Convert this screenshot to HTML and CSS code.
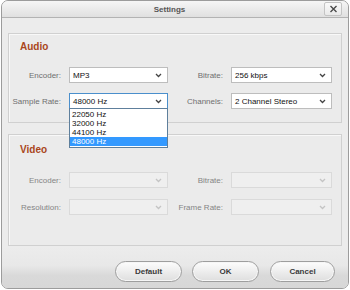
FILE: index.html
```html
<!DOCTYPE html>
<html>
<head>
<meta charset="utf-8">
<link rel="stylesheet" href="styles.css">
</head>
<body>
<div class="window">
  <div class="titlebar">
    <span class="tb-spacer"></span>
    <span class="title">Settings</span>
    <span class="tb-right">
      <span class="close">
        <svg width="9" height="8" viewBox="0 0 9 8"><path d="M1.5 1 L7.5 7 M7.5 1 L1.5 7" stroke="#4a4a4a" stroke-width="1.4" fill="none"/></svg>
      </span>
    </span>
  </div>
  <div class="content">
    <section class="group audio">
      <h2 class="group-title">Audio</h2>
      <div class="grid">
        <span class="label">Encoder:</span>
        <div class="select"><span class="val">MP3</span><svg class="chev" width="7" height="5" viewBox="0 0 7 5"><path d="M1 1 L3.5 3.5 L6 1" stroke="#444" stroke-width="1.3" fill="none"/></svg></div>
        <span class="label">Bitrate:</span>
        <div class="select"><span class="val">256 kbps</span><svg class="chev" width="7" height="5" viewBox="0 0 7 5"><path d="M1 1 L3.5 3.5 L6 1" stroke="#444" stroke-width="1.3" fill="none"/></svg></div>
        <span class="label">Sample Rate:</span>
        <div class="select focus"><span class="val">48000 Hz</span><svg class="chev" width="7" height="5" viewBox="0 0 7 5"><path d="M1 1 L3.5 3.5 L6 1" stroke="#444" stroke-width="1.3" fill="none"/></svg>
          <ul class="list">
            <li>22050 Hz</li>
            <li>32000 Hz</li>
            <li>44100 Hz</li>
            <li class="sel">48000 Hz</li>
          </ul>
        </div>
        <span class="label">Channels:</span>
        <div class="select"><span class="val">2 Channel Stereo</span><svg class="chev" width="7" height="5" viewBox="0 0 7 5"><path d="M1 1 L3.5 3.5 L6 1" stroke="#444" stroke-width="1.3" fill="none"/></svg></div>
      </div>
    </section>
    <section class="group video">
      <h2 class="group-title">Video</h2>
      <div class="grid">
        <span class="label dis">Encoder:</span>
        <div class="select disabled"><span class="val"></span><svg class="chev" width="7" height="5" viewBox="0 0 7 5"><path d="M1 1 L3.5 3.5 L6 1" stroke="#c4c4c4" stroke-width="1.3" fill="none"/></svg></div>
        <span class="label dis">Bitrate:</span>
        <div class="select disabled"><span class="val"></span><svg class="chev" width="7" height="5" viewBox="0 0 7 5"><path d="M1 1 L3.5 3.5 L6 1" stroke="#c4c4c4" stroke-width="1.3" fill="none"/></svg></div>
        <span class="label dis">Resolution:</span>
        <div class="select disabled"><span class="val"></span><svg class="chev" width="7" height="5" viewBox="0 0 7 5"><path d="M1 1 L3.5 3.5 L6 1" stroke="#c4c4c4" stroke-width="1.3" fill="none"/></svg></div>
        <span class="label dis">Frame Rate:</span>
        <div class="select disabled"><span class="val"></span><svg class="chev" width="7" height="5" viewBox="0 0 7 5"><path d="M1 1 L3.5 3.5 L6 1" stroke="#c4c4c4" stroke-width="1.3" fill="none"/></svg></div>
      </div>
    </section>
  </div>
  <div class="footer">
    <span class="btn b-default">Default</span>
    <span class="btn b-ok">OK</span>
    <span class="btn b-cancel">Cancel</span>
  </div>
</div>
</body>
</html>
```

FILE: styles.css
```css
* { box-sizing: border-box; }
html, body { margin: 0; padding: 0; background: #ffffff; }
body {
  font-family: "Liberation Sans", Arial, sans-serif;
  font-size: 8px;
  color: #222;
}
.window {
  width: 348px;
  height: 289px;
  margin-left: 1px;
  border: 1px solid #9c9c9c;
  border-radius: 7px;
  background: #ececec;
  overflow: hidden;
  display: flex;
  flex-direction: column;
}
.titlebar {
  height: 17px;
  flex: none;
  border-bottom: 1px solid #b3b3b3;
  background: linear-gradient(#f6f6f6, #e0e0e0);
  display: grid;
  grid-template-columns: 1fr auto 1fr;
  align-items: center;
}
.title {
  font-weight: bold;
  font-size: 8px;
  color: #555;
  margin-right: 11px;
}
.tb-right {
  display: flex;
  justify-content: flex-end;
  align-self: start;
  padding-right: 6px;
}
.close {
  width: 18px;
  height: 14px;
  margin-top: 1px;
  border: 1px solid #c4c4c4;
  border-radius: 2px;
  background: linear-gradient(#fafafa, #e9e9e9);
  display: flex;
  align-items: center;
  justify-content: center;
}
.content {
  padding: 15px 6px 0 6px;
  display: flex;
  flex-direction: column;
  gap: 11px;
}
.group {
  border: 1px solid #d0d0d0;
  box-shadow: inset 1px 1px 0 #f8f8f8;
  background: #ebebeb;
}
.audio { height: 90px; padding-top: 7px; }
.video { height: 112px; padding-top: 9px; }
.group-title {
  margin: 0 0 0 11px;
  font-size: 10px;
  line-height: 12px;
  font-weight: bold;
  color: #a9461b;
}
.grid {
  display: grid;
  grid-template-columns: 52px 99px 47px 101px;
  column-gap: 8px;
  grid-auto-rows: 16px;
}
.audio .grid { margin-top: 14px; row-gap: 10px; }
.video .grid { margin-top: 16px; row-gap: 11px; }
.label {
  text-align: right;
  align-self: center;
  color: #6f6f6f;
  white-space: nowrap;
}
.label.dis { color: #858585; }
.select {
  position: relative;
  border: 1px solid #bdbdbd;
  background: #ffffff;
  display: flex;
  align-items: center;
  justify-content: space-between;
  padding: 0 5px 0 3px;
  color: #111;
}
.select.focus { border-color: #4a8fcc; }
.select.disabled {
  background: #efefef;
  border-color: #dadada;
}
.chev { flex: none; }
.list {
  position: absolute;
  left: -1px;
  top: 14px;
  width: 99px;
  margin: 0;
  padding: 1px 0;
  list-style: none;
  background: #fff;
  border: 1px solid #5e7f9c;
  z-index: 5;
}
.list li {
  height: 9px;
  line-height: 9px;
  padding-left: 2px;
  color: #111;
}
.list li.sel {
  background: #3399ff;
  color: #fff;
}
.footer {
  flex: 1;
  background: linear-gradient(#ececec 0%, #e8e8e8 45%, #d9d9d9 70%, #d7d7d7 100%);
  display: flex;
  justify-content: flex-end;
  align-items: flex-start;
  gap: 9px;
  padding: 14px 13px 0 0;
  margin-top: 1px;
}
.btn {
  height: 21px;
  border: 1px solid #9e9e9e;
  border-radius: 11px;
  background: linear-gradient(#fdfdfd, #ececec 55%, #dedede);
  box-shadow: inset 0 0 0 1px #f6f6f6;
  display: flex;
  align-items: center;
  justify-content: center;
  font-weight: bold;
  font-size: 8px;
  color: #3a3a3a;
}
.b-default { width: 67px; }
.b-ok { width: 67px; margin-left: 1px; }
.b-cancel { width: 65px; margin-left: 2px; }
```
